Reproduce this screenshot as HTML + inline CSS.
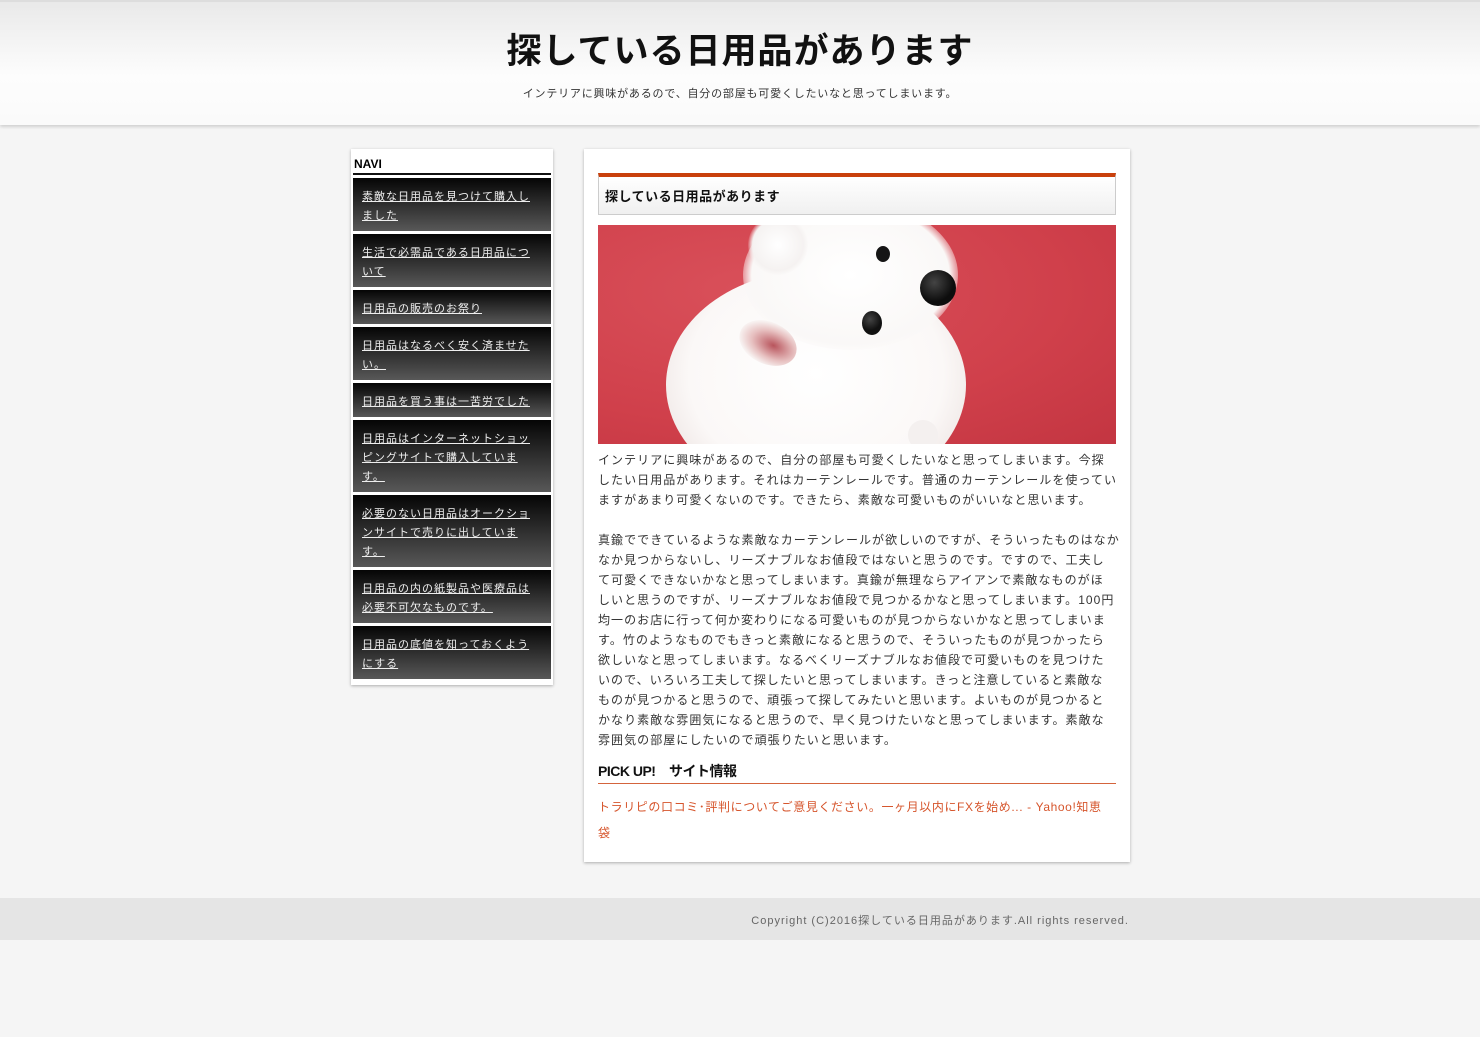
<!DOCTYPE html>
<html lang="ja"><head><meta charset="utf-8">
<style>
*{margin:0;padding:0;box-sizing:border-box}
body{width:1480px;height:1037px;background:#f5f5f5;font-family:"Liberation Sans","Noto Sans CJK JP",sans-serif;color:#333;overflow:hidden;position:relative}
#hd{position:absolute;left:0;top:0;width:1480px;height:125px;background:linear-gradient(#e9e9e9,#fdfdfd 60%,#fafafa);border-top:2px solid #ddd;box-shadow:0 2px 3px rgba(0,0,0,.15);text-align:center}
#hd h1{font-size:35px;font-weight:bold;color:#111;letter-spacing:1px;margin-top:28px;line-height:44px}
#hd p{font-size:11px;letter-spacing:.8px;color:#333;margin-top:11px}
#side{position:absolute;left:351px;top:149px;width:202px;height:536px;background:#fff;box-shadow:0 1px 3px rgba(0,0,0,.3);padding:0 2px}
#side h3{font-size:12px;color:#000;padding:8px 1px 2px;border-bottom:2px solid #111;height:26px;margin-bottom:3px}
.nv{display:block;background:linear-gradient(#050505,#585858);margin-bottom:3px;padding:10px 8px 5px 9px;font-size:11px;line-height:19px;letter-spacing:1px;color:#eee;white-space:nowrap}
.nv span{text-decoration:underline}
#main{position:absolute;left:584px;top:149px;width:546px;height:713px;background:#fff;box-shadow:0 1px 3px rgba(0,0,0,.3);padding:24px 14px}
#ttl{border:1px solid #ccc;border-top:4px solid #c9400c;height:42px;background:linear-gradient(#fff,#f0f0f0);font-size:13px;font-weight:bold;color:#111;padding:9px 6px;letter-spacing:.5px}
#img{margin-top:10px;width:518px;height:219px;position:relative;overflow:hidden;background:radial-gradient(ellipse at 30% 30%,#d9505a,#d0404b 60%,#c33541)}
.b{position:absolute;border-radius:50%}
.txt{font-size:12px;line-height:20px;letter-spacing:1.05px;color:#333;white-space:nowrap;margin-top:6px}
#pk{margin-top:11px;font-size:14px;font-weight:bold;color:#111;letter-spacing:-.5px;border-bottom:1px solid #d4643c;padding-bottom:2px}
#lk{font-size:12px;color:#d6552c;line-height:26px;letter-spacing:.6px;margin-top:10px;white-space:nowrap}
#ft{position:absolute;left:0;top:898px;width:1480px;height:42px;background:#e5e5e5;font-size:11px;color:#666;letter-spacing:1px}
#ft p{position:absolute;right:351px;top:14px}
</style></head><body>
<div id="hd"><h1>探している日用品があります</h1><p>インテリアに興味があるので、自分の部屋も可愛くしたいなと思ってしまいます。</p></div>
<div id="side"><h3>NAVI</h3>
<div class="nv"><span>素敵な日用品を見つけて購入し</span><br><span>ました</span></div>
<div class="nv"><span>生活で必需品である日用品につ</span><br><span>いて</span></div>
<div class="nv"><span>日用品の販売のお祭り</span></div>
<div class="nv"><span>日用品はなるべく安く済ませた</span><br><span>い。</span></div>
<div class="nv"><span>日用品を買う事は一苦労でした</span></div>
<div class="nv"><span>日用品はインターネットショッ</span><br><span>ピングサイトで購入していま</span><br><span>す。</span></div>
<div class="nv"><span>必要のない日用品はオークショ</span><br><span>ンサイトで売りに出していま</span><br><span>す。</span></div>
<div class="nv"><span>日用品の内の紙製品や医療品は</span><br><span>必要不可欠なものです。</span></div>
<div class="nv"><span>日用品の底値を知っておくよう</span><br><span>にする</span></div>
</div>
<div id="main">
<div id="ttl">探している日用品があります</div>
<div id="img">
<div class="b" style="left:68px;top:45px;width:300px;height:230px;background:radial-gradient(ellipse at 50% 45%,#fff,#fbf8f7 60%,#eee6e4 80%,rgba(238,230,228,0) 90%)"></div>
<div class="b" style="left:145px;top:-25px;width:215px;height:150px;background:radial-gradient(ellipse at 50% 50%,#fff,#faf8f7 65%,rgba(250,248,247,0) 75%)"></div>
<div class="b" style="left:150px;top:-10px;width:60px;height:60px;background:radial-gradient(#fff,#f5f2f1 60%,rgba(245,242,241,0) 72%)"></div>
<div class="b" style="left:140px;top:97px;width:60px;height:42px;transform:rotate(25deg);background:radial-gradient(ellipse at 60% 50%,#b8545c,#e7c0c0 45%,#f7f0ef 70%,rgba(255,255,255,0) 80%)"></div>
<div class="b" style="left:322px;top:45px;width:36px;height:36px;background:radial-gradient(circle at 40% 35%,#444,#0d0d0d 60%)"></div>
<div class="b" style="left:278px;top:21px;width:14px;height:16px;background:#151515"></div>
<div class="b" style="left:264px;top:86px;width:20px;height:24px;background:radial-gradient(circle at 40% 35%,#444,#111 55%)"></div>
<div class="b" style="left:310px;top:195px;width:30px;height:30px;background:#f4f0ef"></div>
</div>
<div class="txt">インテリアに興味があるので、自分の部屋も可愛くしたいなと思ってしまいます。今探<br>したい日用品があります。それはカーテンレールです。普通のカーテンレールを使ってい<br>ますがあまり可愛くないのです。できたら、素敵な可愛いものがいいなと思います。<br><br>真鍮でできているような素敵なカーテンレールが欲しいのですが、そういったものはなか<br>なか見つからないし、リーズナブルなお値段ではないと思うのです。ですので、工夫し<br>て可愛くできないかなと思ってしまいます。真鍮が無理ならアイアンで素敵なものがほ<br>しいと思うのですが、リーズナブルなお値段で見つかるかなと思ってしまいます。100円<br>均一のお店に行って何か変わりになる可愛いものが見つからないかなと思ってしまいま<br>す。竹のようなものでもきっと素敵になると思うので、そういったものが見つかったら<br>欲しいなと思ってしまいます。なるべくリーズナブルなお値段で可愛いものを見つけた<br>いので、いろいろ工夫して探したいと思ってしまいます。きっと注意していると素敵な<br>ものが見つかると思うので、頑張って探してみたいと思います。よいものが見つかると<br>かなり素敵な雰囲気になると思うので、早く見つけたいなと思ってしまいます。素敵な<br>雰囲気の部屋にしたいので頑張りたいと思います。</div>
<div id="pk">PICK UP!　サイト情報</div>
<div id="lk">トラリピの口コミ･評判についてご意見ください。一ヶ月以内にFXを始め... - Yahoo!知恵<br>袋</div>
</div>
<div id="ft"><p>Copyright (C)2016探している日用品があります.All rights reserved.</p></div>
</body></html>
